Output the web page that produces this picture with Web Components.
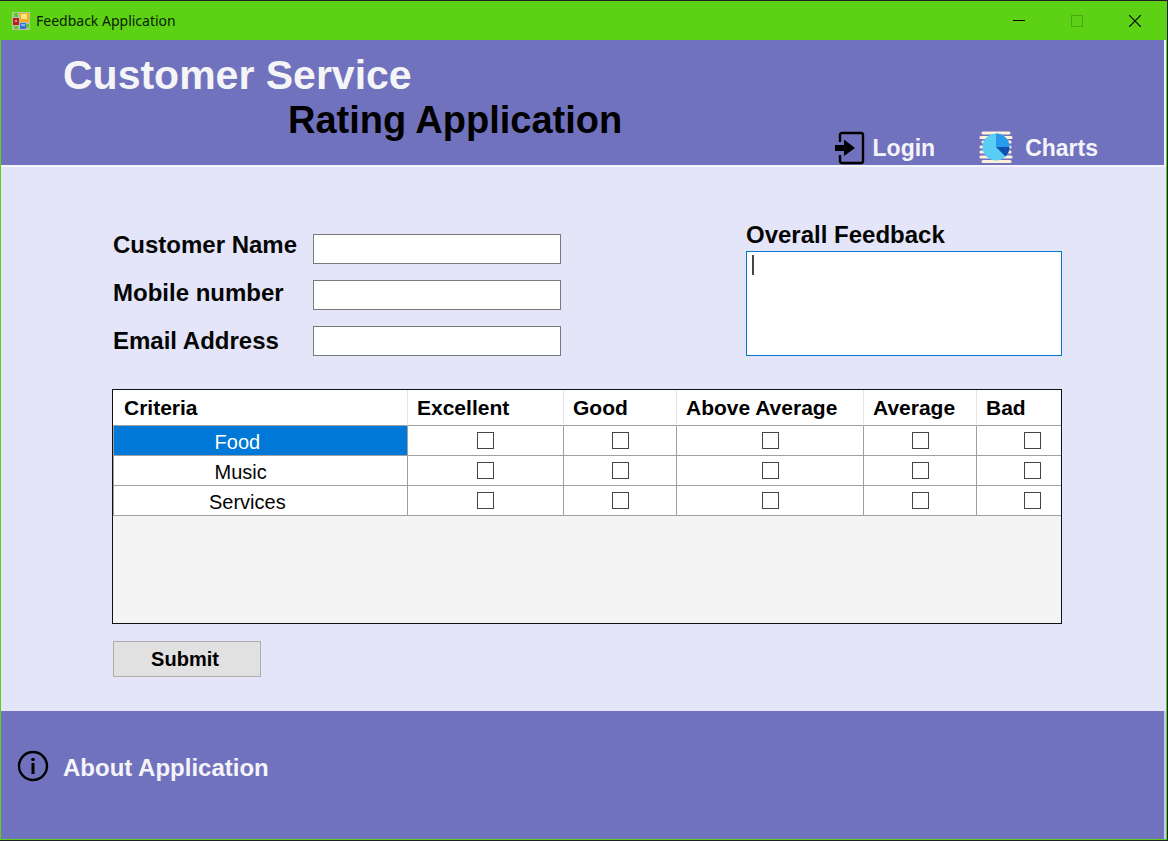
<!DOCTYPE html>
<html lang="en">
<head>
<meta charset="utf-8">
<title>Feedback Application</title>
<style>
  body { margin: 0; background: #1d1f20; font-family: "Liberation Sans", Arial, sans-serif; color: #050505; }
</style>
</head>
<body>
<app-window>
  <title-bar slot="bar">Feedback Application</title-bar>
  <app-header></app-header>
  <feedback-form></feedback-form>
  <app-footer></app-footer>
</app-window>

<script>
const define = (name, html, setup) => {
  customElements.define(name, class extends HTMLElement {
    constructor() {
      super();
      const t = document.createElement('template');
      t.innerHTML = '<style>*{box-sizing:border-box}</style>' + html;
      this.attachShadow({ mode: 'open' }).append(t.content.cloneNode(true));
      if (setup) setup(this.shadowRoot, this);
    }
  });
};

define('app-window', `
<style>
  :host { display: block; padding: 1px 1px 1px 0; box-sizing: border-box; }
  .frame { display: flex; flex-direction: column; min-height: calc(100vh - 2px); background: #5dd214; padding: 0 1px 1px; }
  .client { flex: 1; display: flex; flex-direction: column; background: #e4e5f9; }
  ::slotted(feedback-form) { flex: 1; }
</style>
<div class="frame"><slot name="bar"></slot><div class="client"><slot></slot></div></div>`);

define('title-bar', `
<style>
  :host { display: flex; align-items: center; height: 39px; padding-left: 11px; font: 14px "Noto Sans", "Open Sans", sans-serif; color: #0b1c04; }
  .name { flex: 1; margin-left: 6px; }
  button { width: 58px; height: 39px; padding: 0; border: 0; background: none; display: grid; place-items: center; color: #000; }
  button:disabled { color: #4aa913; }
  .controls { display: flex; padding-right: 2px; }
</style>
<svg width="18" height="18" viewBox="0 0 18 18" aria-hidden="true">
  <rect width="18" height="18" fill="#aec79c"/>
  <path d="M2 1h4v4H2zM2 14h4v3H2zM14 12h3v4h-3z" fill="#62c62c"/>
  <rect x="1" y="6" width="6" height="7" fill="#b91c25"/><rect x="3" y="8" width="2" height="2" fill="#f28a83"/>
  <rect x="8" y="1" width="9" height="9" fill="#f4ad20"/><rect x="9" y="2" width="6" height="5" fill="#ffe27a"/>
  <rect x="8" y="11" width="6" height="6" fill="#3c70dc"/><rect x="9" y="12" width="4" height="2" fill="#85b3fa"/>
</svg>
<span class="name"><slot></slot></span>
<div class="controls">
  <button aria-label="Minimize"><svg width="12" height="12"><path d="M0 5.5h12" stroke="currentColor"/></svg></button>
  <button aria-label="Maximize" disabled><svg width="12" height="12"><rect x=".5" y=".5" width="11" height="11" fill="none" stroke="currentColor"/></svg></button>
  <button aria-label="Close"><svg width="12" height="12"><path d="M0 0l12 12M12 0L0 12" stroke="currentColor" stroke-width="1.2"/></svg></button>
</div>`);

define('icon-button', `
<style>
  :host { display: block; }
  button { display: flex; align-items: center; gap: var(--gap, 8px); padding: 0; border: 0; background: none; font: bold var(--size, 24px)/32px "Liberation Sans", Arial, sans-serif; color: #f4f4fa; white-space: nowrap; }
  ::slotted(svg) { display: block; }
  span { padding-top: var(--drop, 0px); }
</style>
<button><slot name="icon"></slot><span><slot></slot></span></button>`);

define('app-header', `
<style>
  :host { display: flex; justify-content: space-between; align-items: flex-end; min-height: 127px; background: #7172bd; border-right: 2px solid #f4f4fb; border-bottom: 2px solid #f4f4fb; box-sizing: border-box; padding: 0 66px 0 62px; }
  h1 { margin: 0; align-self: flex-start; padding-top: 13px; font-size: 41px; line-height: 45px; white-space: nowrap; color: #f5f5f7; }
  h1 span { display: block; }
  .second { padding-left: 225px; font-size: 38px; color: #000; }
  nav { display: flex; gap: 44px; --size: 23px; }
  .charts { --gap: 12px; }
</style>
<h1><span>Customer Service</span><span class="second">Rating Application</span></h1>
<nav>
  <icon-button>
    <svg slot="icon" width="30" height="34" viewBox="0 0 30 34" aria-hidden="true">
      <path d="M5 11V4q0-2 2-2h19q2 0 2 2v26q0 2-2 2H7q-2 0-2-2v-6" fill="none" stroke="#000" stroke-width="2.4"/>
      <path d="M0 14h9V8.500L20 17 9 25v-5H0z" fill="#000"/>
    </svg>Login</icon-button>
  <icon-button class="charts">
    <svg slot="icon" width="34" height="34" viewBox="0 0 34 34" aria-hidden="true">
      <path d="M4 2h26M2 6.500h30M4 11h27M2 16h29M2 21h29M2 26h30M4 30.500h27" stroke="#fff0dc" stroke-width="3.200" stroke-linecap="round"/>
      <circle cx="17" cy="16" r="13.500" fill="#5acdf5"/>
      <path d="M17 16V2.500A13.500 13.500 0 0 1 30.500 16z" fill="#259be9"/>
      <path d="M17 16h13.500a13.500 13.500 0 0 1-4 9.500z" fill="#104fae"/>
    </svg>Charts</icon-button>
</nav>`);

define('feedback-form', `
<style>
  :host { display: block; padding: 54px 104px 34px 111px; }
  .fields { display: flex; justify-content: space-between; min-height: 144px; }
  .contact { display: flex; }
  label { display: block; font: bold 24px/48px "Liberation Sans", Arial, sans-serif; white-space: nowrap; }
  .labels { width: 201px; padding-left: 1px; }
  .inputs { display: grid; grid-auto-rows: 30px; gap: 16px; padding-top: 13px; width: 248px; }
  input { width: 100%; height: 100%; border: 1px solid #7a7a7a; background: #fff; padding: 2px 4px; font: 20px "Liberation Sans", Arial, sans-serif; border-radius: 0; }
  .overall { width: 316px; display: flex; flex-direction: column; }
  .overall label { line-height: 32px; margin-top: -2px; }
  textarea { display: block; width: 100%; height: 105px; resize: none; outline: 0; border: 1px solid #0078d7; border-radius: 0; font: 20px "Liberation Sans", Arial, sans-serif; padding: 2px 4px;
    background: linear-gradient(#444, #444) 5px 3px / 2px 20px no-repeat #fff; }
  textarea:focus, textarea:not(:placeholder-shown) { background: #fff; }
  rating-grid { margin-top: 24px; }
  .submit { display: block; width: 148px; height: 36px; margin: 17px 0 0 1px; border: 1px solid #adadad; background: #e1e1e1; color: #000; font: bold 20px "Liberation Sans", Arial, sans-serif; padding: 0 4px 0 0; }
</style>
<form onsubmit="return false">
  <div class="fields">
    <div class="contact">
      <div class="labels">
        <label for="name">Customer Name</label>
        <label for="mobile">Mobile number</label>
        <label for="email">Email Address</label>
      </div>
      <div class="inputs">
        <input id="name" type="text"><input id="mobile" type="tel"><input id="email" type="email">
      </div>
    </div>
    <div class="overall">
      <label for="overall">Overall Feedback</label>
      <textarea id="overall" placeholder=" "></textarea>
    </div>
  </div>
  <rating-grid></rating-grid>
  <button class="submit">Submit</button>
</form>`);

define('rating-grid', `
<style>
  :host { display: block; height: 235px; overflow: hidden; border: 1px solid #111; background: #f4f4f4; box-sizing: border-box; }
  table { table-layout: fixed; width: 976px; border-collapse: separate; border-spacing: 0; background: #fff; }
  th { height: 36px; padding: 0 0 0 9px; border-right: 1px solid #e4e4e4; border-bottom: 1px solid #a0a0a0; font-size: 21px; line-height: 24px; text-align: left; color: #000; white-space: nowrap; }
  th:first-child { padding-left: 11px; }
  td { height: 30px; padding: 0; border-right: 1px solid #a0a0a0; border-bottom: 1px solid #a0a0a0; font-size: 20px; line-height: 24px; text-align: center; }
  td:first-child { padding: 2px 0 0 95px; border-left: 1px solid #a0a0a0; text-align: left; white-space: pre; }
  tr.selected td:first-child { background: #0078d7; color: #fff; }
  input { appearance: none; display: block; width: 17px; height: 17px; margin: 0 auto; border: 1px solid #444; background: #fff; border-radius: 0; }
  input:checked { background: #333; box-shadow: inset 0 0 0 3px #fff; }
</style>
<table>
  <colgroup><col style="width:295px"><col style="width:156px"><col style="width:113px"><col style="width:187px"><col style="width:113px"><col style="width:112px"></colgroup>
  <thead><tr><th scope="col">Criteria</th></tr></thead>
  <tbody></tbody>
</table>`, root => {
  const grades = ['Excellent', 'Good', 'Above Average', 'Average', 'Bad'];
  const head = root.querySelector('thead tr');
  grades.forEach(g => {
    const th = document.createElement('th');
    th.scope = 'col'; th.textContent = g; head.append(th);
  });
  // Short names carry a leading space to sit towards the middle of the column.
  [' Food', ' Music', 'Services'].forEach((name, i) => {
    const tr = root.querySelector('tbody').insertRow();
    if (i === 0) tr.className = 'selected';
    tr.insertCell().textContent = name;
    grades.forEach(g => {
      const box = document.createElement('input');
      box.type = 'checkbox';
      box.setAttribute('aria-label', name.trim() + ': ' + g);
      tr.insertCell().append(box);
    });
  });
});

define('app-footer', `
<style>
  :host { display: block; min-height: 128px; box-sizing: border-box; padding: 37px 16px 0; background: #7172bd; border-right: 2px solid #c9caee; }
  icon-button { --gap: 14px; --drop: 4px; }
</style>
<icon-button>
  <svg slot="icon" width="32" height="32" viewBox="0 0 32 32" aria-hidden="true">
    <circle cx="16" cy="16" r="14" fill="none" stroke="#000" stroke-width="2.400"/>
    <circle cx="16" cy="9.500" r="1.800"/><path d="M16 13v11" stroke="#000" stroke-width="3"/>
  </svg>About Application</icon-button>`);
</script>
</body>
</html>
